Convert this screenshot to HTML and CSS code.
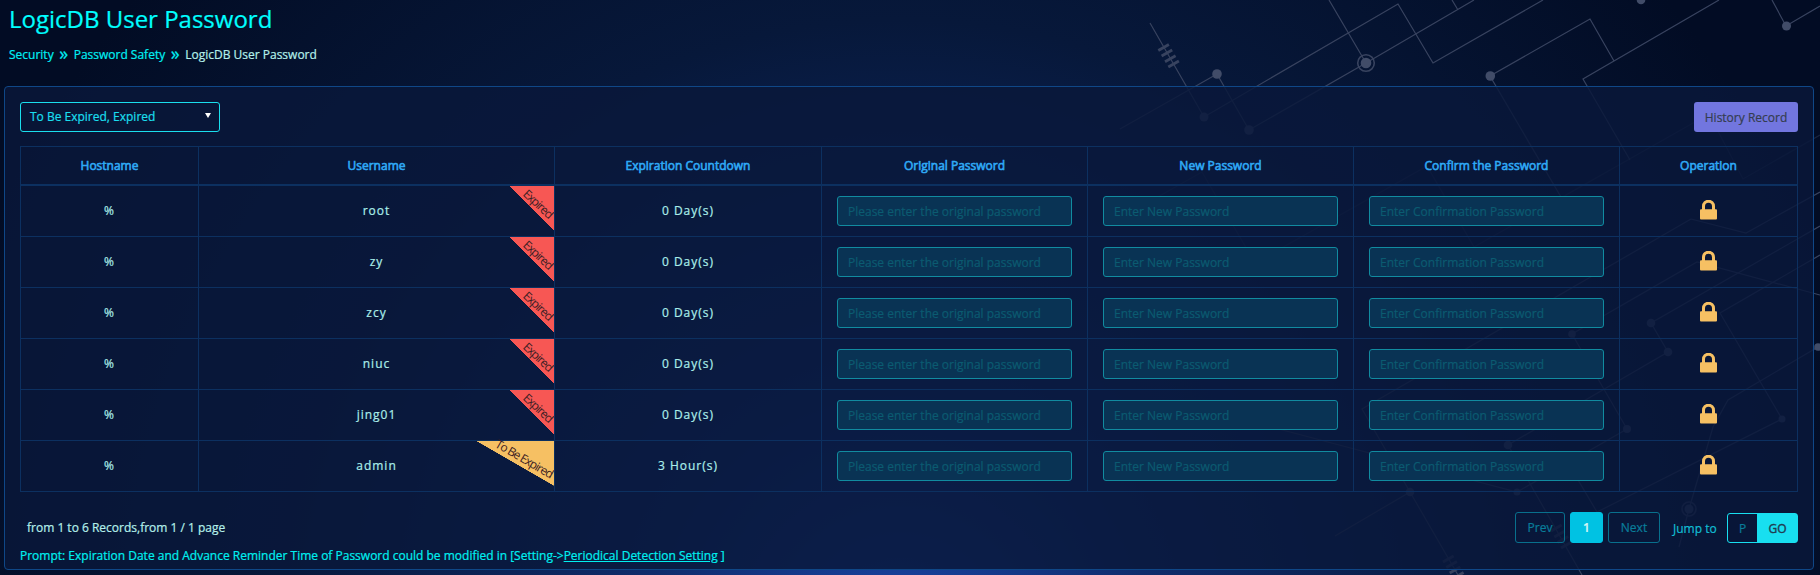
FILE: index.html
```html
<!DOCTYPE html>
<html lang="en">
<head>
<meta charset="utf-8">
<title>LogicDB User Password</title>
<link rel="stylesheet" href="styles.css">
</head>
<body>
<svg class="backdrop" viewBox="0 0 1820 575" aria-hidden="true">
  <g fill="none" stroke="#38435f" stroke-width="1.2">
    <path d="M1150 23L1204 117L1398 4L1433 63L1543 0"/>
    <path d="M1120 129L1217 74L1249 130L1366 63L1474 0M1329 0L1366 63M1452 0L1458 10"/>
    <path d="M1614 61L1590 19L1490 76L1561 197M1719 0L1583 79L1630 160M1772 0L1786 26L1820 6"/>
    <path d="M1691 219L1746 233L1820 192M1691 219L1362 409L1410 492L1335 536M1410 492L1458 575"/>
    <path d="M1820 295L1697 262L1572 334L1627 429L1517 492L1275 428"/>
    <path d="M1820 226L1651 323L1668 352L1508 445L1582 575M1820 255L1720 313L1782 419L1597 512L1568 463M1818 347L1728 400L1713 427L1689 509L1679 547"/>
    <path stroke-opacity=".45" d="M1147 203L1202 172L1255 263L1427 166L1474 247L1709 114L1743 179L1820 135"/>
    <g stroke-width="1.6"><circle cx="1366" cy="63" r="8.3"/><circle cx="1568" cy="463" r="8"/><circle cx="1689" cy="509" r="7"/></g>
    <g stroke-width="2.8">
      <path d="M1158.3 50.5l10.6-6M1161.6 56l10.6-6M1165 61.7l10.6-6M1168.3 67l10.6-6"/>
      <path d="M1443 562l10.6-6M1446.3 567.5l10.6-6M1449.7 573l10.6-6M1453 578.5l10.6-6"/>
      <path d="M1551 531l10.6-6M1554.3 537l10.6-6M1557.6 542.5l10.6-6M1561 548l10.6-6"/>
    </g>
  </g>
  <g fill="#414c68">
    <circle cx="1217" cy="74" r="4.8"/><circle cx="1204" cy="117" r="4.5"/><circle cx="1249" cy="130" r="4.8"/><circle cx="1366" cy="63" r="5.3"/>
    <circle cx="1490.300" cy="76" r="4.8"/><circle cx="1641" cy="0" r="4.3"/><circle cx="1786.500" cy="26" r="4.5"/>
    <circle cx="1572" cy="334" r="3.8"/><circle cx="1651" cy="323" r="4.300"/><circle cx="1668" cy="352" r="4.300"/><circle cx="1818" cy="347" r="3.8"/>
    <circle cx="1508" cy="445" r="4.300"/><circle cx="1627" cy="429" r="4"/><circle cx="1517" cy="492" r="3.5"/><circle cx="1568" cy="463" r="5"/>
    <circle cx="1410" cy="492" r="4.300"/><circle cx="1689" cy="509" r="4.500"/><circle cx="1782" cy="419" r="3.5"/>
  </g>
</svg>
<header class="head">
  <h1 class="title">LogicDB User Password</h1>
  <nav class="crumbs"><a>Security</a><i>»</i><a>Password Safety</a><i>»</i><span>LogicDB User Password</span></nav>
</header>
<main class="panel">
  <div class="toolbar"><div class="select">To Be Expired, Expired<b class="caret"></b></div><button class="history">History Record</button></div>
  <table class="grid">
    <colgroup><col class="c1"><col class="c2"><col class="c3"><col class="c4"><col class="c5"><col class="c6"><col class="c7"></colgroup>
    <thead><tr><th>Hostname</th><th>Username</th><th>Expiration Countdown</th><th>Original Password</th><th>New Password</th><th>Confirm the Password</th><th>Operation</th></tr></thead>
    <tbody id="rows"></tbody>
  </table>
  <div class="footer">
    <span class="records">from 1 to 6 Records,from 1 / 1 page</span>
    <div class="pager"><span class="pg prev">Prev</span><span class="pg on">1</span><span class="pg next">Next</span><span class="jump">Jump to</span><span class="go"><span class="p">P</span><span class="g">GO</span></span></div>
  </div>
  <p class="prompt">Prompt: Expiration Date and Advance Reminder Time of Password could be modified in [Setting-&gt;<a>Periodical Detection Setting</a> ]</p>
</main>
<script src="rows.js"></script>
</body>
</html>
```
FILE: rows.js
```js
const users = [['root',0],['zy',0],['zcy',0],['niuc',0],['jing01',0],['admin',1]];
document.getElementById('rows').innerHTML = users.map(([name, soon]) => `<tr>
<td>%</td>
<td class="user">${name}<span class="flag ${soon ? 'soon' : 'expired'}"><em>${soon ? 'To Be Expired' : 'Expired'}</em></span></td>
<td>${soon ? '3 Hour(s)' : '0 Day(s)'}</td>
<td class="field"><input placeholder="Please enter the original password"></td>
<td class="field"><input placeholder="Enter New Password"></td>
<td class="field"><input placeholder="Enter Confirmation Password"></td>
<td class="op"><svg class="lock" viewBox="0 0 17 20"><path d="M3.500 10V6.200a5 5 0 0 1 10 0V10" fill="none" stroke="#f6c063" stroke-width="3"/><rect y="9.300" width="17" height="10.200" rx="1" fill="#f6c063"/></svg></td>
</tr>`).join('');
```
FILE: styles.css
```css
* { box-sizing: border-box; }
body {
  margin: 0; height: 575px; overflow: hidden; position: relative;
  font-family: "Open Sans", "Noto Sans", sans-serif; font-size: 12px; color: #aaeeea;
  -webkit-text-stroke: .2px currentColor;
  background: radial-gradient(ellipse 1000px 1000px at 900px 640px, #1a44a5 0%, #0f2c6c 25%, #07183a 62%, #020c24 100%);
}
.backdrop { position: absolute; left: 0; top: 0; width: 1820px; height: 575px; }
.head { position: relative; height: 86px; padding-left: 9px; }
.title { margin: 0; font-size: 24px; line-height: 38px; font-weight: 400; color: #00ffff; }
.crumbs { display: flex; line-height: 20px; margin-top: 7px; color: #00f0f4; }
.crumbs i { width: 20px; text-align: center; font-style: normal; font-size: 18px; line-height: 16px; }
.crumbs span { color: #b4f0ea; }
.panel {
  position: relative; margin-left: 4px; width: 1810px; height: 484px; padding: 15px;
  border: 1px solid #0f4787; border-radius: 4px; background: rgba(10, 24, 58, .84);
}
.toolbar { display: flex; justify-content: space-between; height: 30px; }
.select {
  display: flex; align-items: center; justify-content: space-between;
  width: 200px; height: 30px; padding: 0 8px 1px 9px;
  border: 1px solid #1adfee; border-radius: 3px; color: #1adfee;
}
.caret { border: 3px solid transparent; border-top: 5px solid #fff; border-bottom: 0; margin-bottom: 2px; }
.history { width: 104px; height: 30px; padding: 1px 0 0; border: 0; border-radius: 3px; background: #7276df; color: #343d50; font: 12px "Open Sans"; -webkit-text-stroke: .2px #343d50; }
.grid { width: 1778px; margin-top: 14px; border-collapse: separate; border-spacing: 0; table-layout: fixed; border: solid #0c3060; border-width: 1px 0 0 1px; }
.grid th, .grid td { border: solid #0c3060; border-width: 0 1px 1px 0; padding: 0; text-align: center; }
.grid th { height: 39px; color: #2fa9f5; font-weight: 400; -webkit-text-stroke: .6px #2fa9f5; border-bottom-width: 2px; }
.grid td { height: 51px; padding-bottom: 1px; letter-spacing: 1px; }
.grid .field { padding: 0; }
.grid .op { padding-bottom: 3px; }
.c1, .c7 { width: 178px; } .c2 { width: 356px; } .c3 { width: 267px; } .c4, .c5, .c6 { width: 266px; }
.user { position: relative; }
.flag { position: absolute; right: 0; top: 0; height: 45px; letter-spacing: -1px; -webkit-text-stroke: 0; }
.flag em { position: absolute; top: 18px; white-space: nowrap; font-style: normal; line-height: 16px; color: #3c2024; }
.expired { width: 45px; background: linear-gradient(to top right, transparent 50%, #f75754 50.5%); }
.expired em { left: 29px; transform: translate(-50%, -50%) rotate(43deg); }
.soon { width: 78px; background: linear-gradient(to top right, transparent 50%, #f6c063 50.5%); }
.soon em { left: 48px; transform: translate(-50%, -50%) rotate(30deg); }
input { display: block; width: 235px; height: 30px; margin: 0 auto; padding: 0 10px; border: 1px solid #118ba0; border-radius: 3px; background: #093354; font: 12px "Open Sans"; }
input::placeholder { color: #0b5b71; }
.lock { display: block; width: 17px; height: 20px; margin: 0 auto; }
.footer { display: flex; justify-content: space-between; align-items: center; margin-top: 20px; height: 31px; }
.records { margin-left: 7px; color: #b4f0ea; }
.pager { display: flex; align-items: flex-end; }
.pg { height: 31px; line-height: 29px; border: 1px solid #08708d; border-radius: 3px; color: #087d9a; text-align: center; margin-right: 5px; }
.prev { width: 50px; } .next { width: 52px; }
.on { width: 33px; background: #00c2e3; border-color: #00c2e3; color: #d7f5f5; font-weight: 600; }
.jump { width: 62px; padding-left: 8px; line-height: 29px; color: #11bdd4; }
.go { display: flex; width: 71px; height: 30px; line-height: 29px; border: 1px solid #18dff0; border-radius: 3px; text-align: center; }
.p { width: 29px; color: #087d9a; } .g { flex: 1; padding-left: 1px; background: #18dff0; color: #203c50; -webkit-text-stroke: .4px #203c50; }
.prompt { margin: 4px 0 0; line-height: 18px; color: #00f0f0; }
.prompt a { text-decoration: underline; }
```
